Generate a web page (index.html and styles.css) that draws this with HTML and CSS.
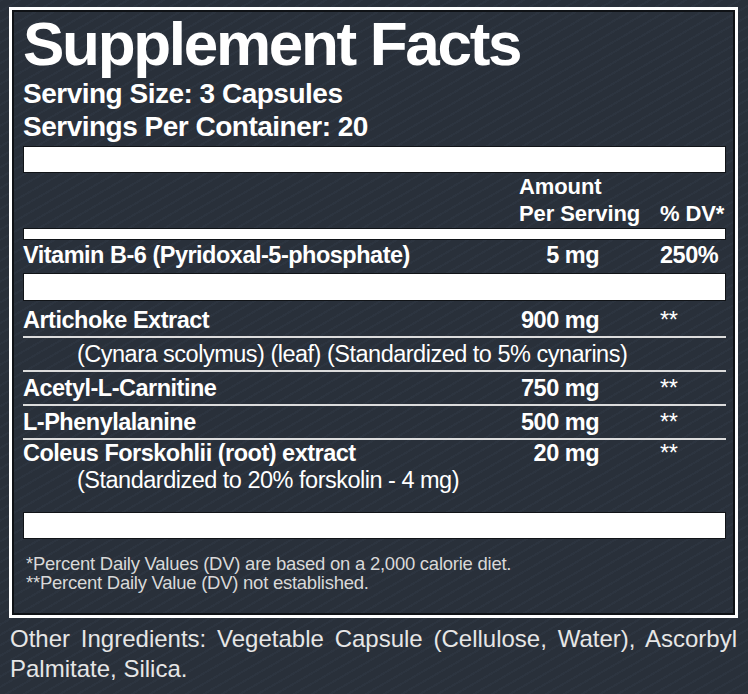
FILE: index.html
```html
<!DOCTYPE html>
<html lang="en">
<head>
<meta charset="utf-8">
<title>Supplement Facts</title>
<link rel="stylesheet" href="styles.css">
</head>
<body>
<main class="page">
  <section class="facts">
    <h1 class="title">Supplement Facts</h1>
    <p class="serving">Serving Size: 3 Capsules</p>
    <p class="serving">Servings Per Container: 20</p>
    <div class="bar bar-thick bar-top"></div>
    <div class="grid head-row">
      <div class="amt-head">Amount<br>Per Serving</div>
      <div class="dv-head">% DV*</div>
    </div>
    <div class="bar bar-thin"></div>
    <div class="grid row row-vit">
      <span class="name">Vitamin B-6 (Pyridoxal-5-phosphate)</span>
      <span class="amt">5 mg</span>
      <span class="dv">250%</span>
    </div>
    <div class="bar bar-mid"></div>
    <div class="grid row ruled row-first">
      <span class="name">Artichoke Extract</span>
      <span class="amt">900 mg</span>
      <span class="dv stars">**</span>
    </div>
    <div class="sub ruled">(Cynara scolymus) (leaf) (Standardized to 5% cynarins)</div>
    <div class="grid row ruled">
      <span class="name">Acetyl-L-Carnitine</span>
      <span class="amt">750 mg</span>
      <span class="dv stars">**</span>
    </div>
    <div class="grid row ruled">
      <span class="name">L-Phenylalanine</span>
      <span class="amt">500 mg</span>
      <span class="dv stars">**</span>
    </div>
    <div class="grid row tight">
      <span class="name">Coleus Forskohlii (root) extract</span>
      <span class="amt">20 mg</span>
      <span class="dv stars">**</span>
    </div>
    <div class="sub tight">(Standardized to 20% forskolin - 4 mg)</div>
    <div class="bar bar-thick bar-end"></div>
    <p class="note note-first">*Percent Daily Values (DV) are based on a 2,000 calorie diet.</p>
    <p class="note">**Percent Daily Value (DV) not established.</p>
  </section>
  <p class="other">Other Ingredients: Vegetable Capsule (Cellulose, Water), Ascorbyl Palmitate, Silica.</p>
</main>
</body>
</html>
```
FILE: styles.css
```css
html, body {
  margin: 0;
  padding: 0;
}

body {
  width: 748px;
  height: 694px;
  overflow: hidden;
  background-color: #29303a;
  background-image: repeating-linear-gradient(150deg, rgba(110, 135, 170, 0.05) 0 2px, transparent 2px 9px);
  font-family: "Liberation Sans", Arial, sans-serif;
  color: #fff;
}

.page {
  padding-top: 7px;
}

.facts {
  margin: 0 10px 0 9px;
  border: 3px solid #fff;
  box-shadow: inset 0 0 0 2px #0f1216;
  padding: 2px 9px 23px 11px;
  background: transparent;
}

.title {
  margin: 0 0 1px 0;
  font-size: 62px;
  line-height: 64px;
  font-weight: bold;
  letter-spacing: -2.3px;
}

.serving {
  margin: 0;
  font-size: 28px;
  line-height: 33px;
  font-weight: bold;
  letter-spacing: -0.5px;
}

.bar {
  box-sizing: border-box;
  background: #fff;
  border: 1px solid #111418;
}

.bar-top {
  margin-top: 3px;
  height: 27px;
}

.bar-thin {
  margin-top: 1px;
  height: 12px;
}

.bar-mid {
  height: 28px;
}

.bar-end {
  margin-top: 18px;
  height: 27px;
}

.grid {
  display: grid;
  grid-template-columns: 1fr 100px 127px;
}

.head-row {
  font-size: 22px;
  line-height: 27px;
  font-weight: bold;
  letter-spacing: -0.1px;
}

.amt-head {
  grid-column: 2;
  margin-left: 20px;
  white-space: nowrap;
}

.dv-head {
  grid-column: 3;
  align-self: end;
  padding-left: 61px;
  white-space: nowrap;
}

.row {
  font-size: 23.5px;
  line-height: 32px;
  font-weight: bold;
  letter-spacing: -0.5px;
  white-space: nowrap;
}

.row-vit {
  line-height: 31px;
  padding-bottom: 2px;
}

.row-first {
  padding-top: 3px;
}

.amt {
  text-align: right;
}

.dv {
  padding-left: 61px;
}

.stars {
  font-weight: normal;
}

.ruled {
  border-bottom: 2px solid #dcdcdc;
}

.tight {
  line-height: 27px;
}

.sub {
  padding-left: 54px;
  font-size: 23.5px;
  line-height: 32px;
  letter-spacing: -0.5px;
  white-space: nowrap;
}

.sub.tight {
  line-height: 27px;
}

.note {
  margin: 0;
  padding-left: 3px;
  font-size: 18.5px;
  line-height: 19px;
  letter-spacing: -0.25px;
  color: #d9d9d9;
}

.note-first {
  margin-top: 15px;
}

.other {
  margin: 6px 11px 0 10px;
  font-size: 24px;
  line-height: 30px;
  text-align: justify;
  color: #e6e6e6;
}
```
